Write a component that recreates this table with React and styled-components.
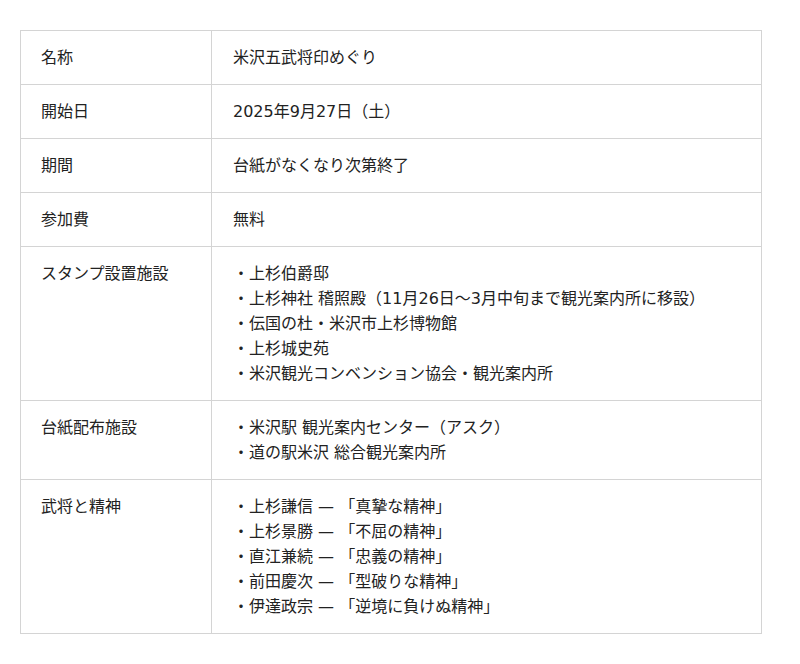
import React from "react";
import styled, { createGlobalStyle } from "styled-components";

const Global = createGlobalStyle`
  html, body { margin: 0; padding: 0; background: #fff; }
  body { font-family: "DejaVu Sans", "Noto Sans CJK JP", sans-serif; color: #222; }
`;

const Page = styled.div`
  padding: 30px 20px;
`;

const Table = styled.table`
  width: 742px;
  border-collapse: collapse;
  font-size: 16px;
  line-height: 25px;
`;

const Label = styled.th`
  width: 150px;
  text-align: left;
  font-weight: normal;
  vertical-align: top;
  padding: 14px 20px;
  border: 1px solid #d4d4d4;
`;

const Value = styled.td`
  vertical-align: top;
  padding: 14px 21px;
  border: 1px solid #d4d4d4;
`;

const List = styled.ul`
  list-style: none;
  margin: 0;
  padding: 0;
`;

const Item = styled.li`
  &::before { content: "・"; }
`;

const rows = [
  ["名称", "米沢五武将印めぐり"],
  ["開始日", "2025年9月27日（土）"],
  ["期間", "台紙がなくなり次第終了"],
  ["参加費", "無料"],
  ["スタンプ設置施設", [
    "上杉伯爵邸",
    "上杉神社 稽照殿（11月26日～3月中旬まで観光案内所に移設）",
    "伝国の杜・米沢市上杉博物館",
    "上杉城史苑",
    "米沢観光コンベンション協会・観光案内所",
  ]],
  ["台紙配布施設", [
    "米沢駅 観光案内センター（アスク）",
    "道の駅米沢 総合観光案内所",
  ]],
  ["武将と精神", [
    "上杉謙信 — 「真摯な精神」",
    "上杉景勝 — 「不屈の精神」",
    "直江兼続 — 「忠義の精神」",
    "前田慶次 — 「型破りな精神」",
    "伊達政宗 — 「逆境に負けぬ精神」",
  ]],
];

export default function App() {
  return (
    <Page>
      <Global />
      <Table>
        <tbody>
          {rows.map(([k, v]) => (
            <tr key={k}>
              <Label>{k}</Label>
              <Value>
                {Array.isArray(v) ? (
                  <List>
                    {v.map((x) => <Item key={x}>{x}</Item>)}
                  </List>
                ) : v}
              </Value>
            </tr>
          ))}
        </tbody>
      </Table>
    </Page>
  );
}
